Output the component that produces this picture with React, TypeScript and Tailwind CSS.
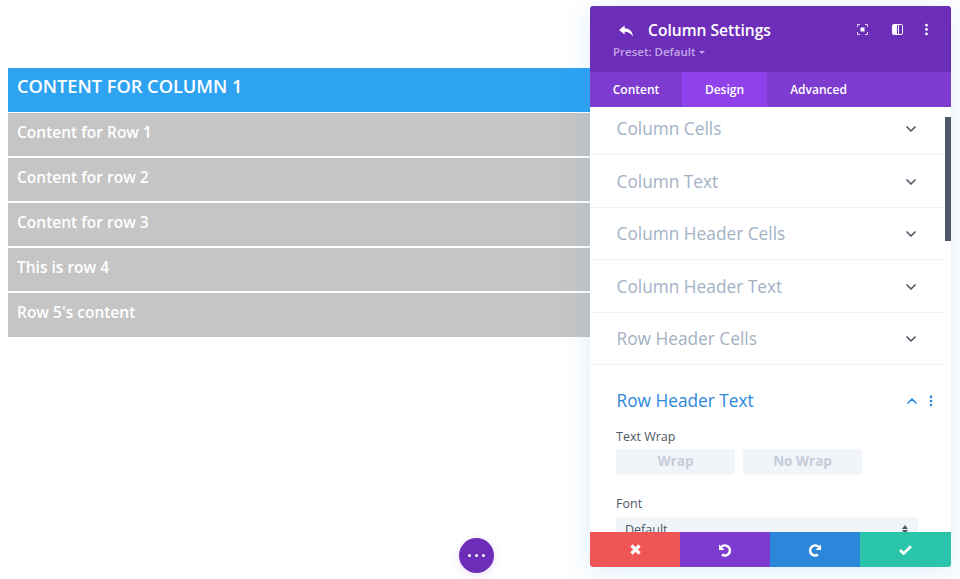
import { ChevronDown, ChevronUp, EllipsisVertical } from "lucide-react";

const rows = [
  "Content for Row 1",
  "Content for row 2",
  "Content for row 3",
  "This is row 4",
  "Row 5's content",
];

const sections = [
  "Column Cells",
  "Column Text",
  "Column Header Cells",
  "Column Header Text",
  "Row Header Cells",
];

function SectionRow({ title }: { title: string }) {
  return (
    <div className="flex h-[52.5px] items-center justify-between border-b border-[#f1f3f6] pt-[2px] pr-[26px] pl-[26.5px] text-[17.3px] text-[#a3b1c4]">
      <span>{title}</span>
      <ChevronDown className="h-[16px] w-[16px] text-[#4c5866]" strokeWidth={2.5} />
    </div>
  );
}

function ToggleButton({ label }: { label: string }) {
  return (
    <div className="flex h-[26px] w-[119px] items-center justify-center rounded-[3px] bg-[#f1f4f9] pb-[2px] text-[13.5px] font-bold text-[#c5ccd9]">
      {label}
    </div>
  );
}

export default function App() {
  return (
    <div className="relative h-[579px] w-[960px] overflow-hidden bg-white font-['Open_Sans',sans-serif]">
      <div className="flex flex-col gap-px pt-[68px] pl-[8px]">
        <div className="h-[44px] w-[620px] bg-[#2ea3f2] px-[9px] pt-[5px] text-[18.2px] leading-[26px] font-semibold text-white">
          CONTENT FOR COLUMN 1
        </div>
        {rows.map((row) => (
          <div
            key={row}
            className="h-[44px] w-[620px] border-b border-white bg-[#c5c5c5] px-[9px] pt-[8px] text-[15.5px] leading-[22px] font-semibold text-white last:border-b-0"
          >
            {row}
          </div>
        ))}
      </div>

      <div className="absolute top-[538px] left-[459px] flex h-[35px] w-[35px] items-center justify-center gap-[4px] rounded-full bg-[#6c2eb9] shadow-[0_2px_10px_rgba(108,46,185,0.15)]">
        <span className="h-[3px] w-[3px] rounded-full bg-white" />
        <span className="h-[3px] w-[3px] rounded-full bg-white" />
        <span className="h-[3px] w-[3px] rounded-full bg-white" />
      </div>

      <div className="absolute top-[6px] left-[590px] flex h-[561px] w-[361px] flex-col overflow-hidden rounded-[3px] bg-white shadow-[0_5px_30px_rgba(43,135,218,0.15)]">
        <div className="relative h-[66px] shrink-0 bg-[#6c2eb9] text-white">
          <svg className="absolute top-[19px] left-[28px]" width="16" height="12" viewBox="0 0 16 13" fill="currentColor">
            <path d="M6.5 0.5 0.5 5.3l6 4.9V7.2c3.2 0 6 .8 9 5.3 0-5-3.4-8.7-9-9.1z" />
          </svg>
          <div className="absolute top-[12px] left-[58px] text-[15.6px] leading-[24px] font-semibold">Column Settings</div>
          <div className="absolute top-[38px] left-[23px] flex items-center gap-[3px] text-[11.5px] leading-[16px] font-semibold text-[#c3a6e6]">
            Preset: Default
            <span className="h-0 w-0 border-x-[3px] border-t-[3px] border-x-transparent border-t-[#c3a6e6]" />
          </div>
          <svg className="absolute top-[18px] left-[267px]" width="11" height="11" viewBox="0 0 11 11" fill="none" stroke="#fff" strokeWidth="1">
            <path d="M0.5 3V0.5H3M8 0.5h2.5V3M10.5 8v2.5H8M3 10.5H0.5V8" opacity="0.8" />
            <rect x="3.5" y="3.5" width="4" height="4" fill="#fff" stroke="none" />
          </svg>
          <svg className="absolute top-[18px] left-[302px]" width="11" height="11" viewBox="0 0 11 11" fill="none">
            <rect x="0.5" y="0.5" width="10" height="10" rx="1" stroke="#fff" />
            <rect x="1" y="1" width="4" height="9" fill="#fff" />
            <rect x="6" y="1" width="1" height="9" fill="#fff" />
          </svg>
          <EllipsisVertical className="absolute top-[16px] left-[329px] h-[15px] w-[15px]" strokeWidth={2.5} />
        </div>

        <div className="flex h-[35px] shrink-0 bg-[#7e3bd0] text-[12px] font-semibold text-white">
          <div className="flex w-[92px] items-center justify-center">Content</div>
          <div className="flex w-[85px] items-center justify-center bg-[#8f42ec]">Design</div>
          <div className="flex w-[103px] items-center justify-center">Advanced</div>
        </div>

        <div className="relative min-h-0 flex-1 overflow-hidden">
          <div className="absolute top-[10px] right-0 h-[124px] w-[6px] bg-[#4c5866]" />
          <div className="-mt-[4.5px] w-[355px]">
            {sections.map((section) => (
              <SectionRow key={section} title={section} />
            ))}
            <div className="flex items-center justify-between pt-[24px] pr-[7px] pl-[26.5px] text-[17.3px] leading-[24px] text-[#2b87da]">
              <span>Row Header Text</span>
              <span className="flex items-center gap-[4px]">
                <ChevronUp className="h-[16px] w-[16px]" strokeWidth={2.5} />
                <EllipsisVertical className="h-[14px] w-[14px]" strokeWidth={2.5} />
              </span>
            </div>
            <div className="pt-[15px] pl-[26px] text-[12.5px] leading-[18px] font-medium text-[#4c5866]">
              Text Wrap
            </div>
            <div className="flex gap-[8px] pt-[3px] pl-[26px]">
              <ToggleButton label="Wrap" />
              <ToggleButton label="No Wrap" />
            </div>
            <div className="pt-[20px] pl-[26px] text-[12.5px] leading-[18px] font-medium text-[#4c5866]">
              Font
            </div>
            <div className="mt-[4px] ml-[26px] flex h-[30px] w-[302px] justify-between rounded-[3px] bg-[#f1f4f9] pt-[4px] pr-[10px] pl-[9px] text-[12.5px] font-medium text-[#4c5866]">
              <span>Default</span>
              <span className="mt-[4px] flex flex-col gap-px">
                <span className="h-0 w-0 border-x-[3px] border-b-[4px] border-x-transparent border-b-[#4c5866]" />
                <span className="h-0 w-0 border-x-[3px] border-t-[4px] border-x-transparent border-t-[#4c5866]" />
              </span>
            </div>
          </div>
        </div>

        <div className="flex h-[35px] shrink-0 text-white">
          <div className="flex w-[90px] items-center justify-center bg-[#ef5555]">
            <svg width="11" height="11" viewBox="0 0 11 11" fill="none" stroke="currentColor" strokeWidth="3.2">
              <path d="M1.5 1.5l8 8M9.5 1.5l-8 8" />
            </svg>
          </div>
          <div className="flex w-[90px] items-center justify-center bg-[#7e3bd0]">
            <svg width="14" height="14" viewBox="0 0 14 14" fill="none" stroke="currentColor" strokeWidth="2.6">
              <path d="M3.4 3.8A5 5 0 1 1 4 11.6" />
              <path d="M1 1.5V7h5.5z" fill="currentColor" stroke="none" />
            </svg>
          </div>
          <div className="flex w-[90px] items-center justify-center bg-[#2b87da]">
            <svg width="14" height="14" viewBox="0 0 14 14" fill="none" stroke="currentColor" strokeWidth="2.6">
              <path d="M10.6 3.8A5 5 0 1 0 10 11.6" />
              <path d="M13 1.5V7H7.5z" fill="currentColor" stroke="none" />
            </svg>
          </div>
          <div className="flex w-[91px] items-center justify-center bg-[#29c4a9]">
            <svg width="13" height="10" viewBox="0 0 13 10" fill="none" stroke="currentColor" strokeWidth="2.8">
              <path d="M1 5l3.6 3.4L12 1.2" />
            </svg>
          </div>
        </div>
      </div>
    </div>
  );
}
